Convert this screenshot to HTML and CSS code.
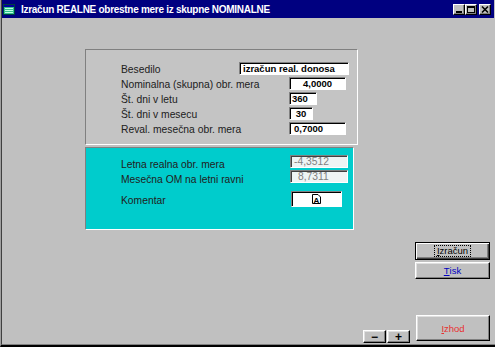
FILE: index.html
```html
<!DOCTYPE html>
<html>
  <head>
    <meta charset="utf-8">
    <title>Izračun REALNE obrestne mere iz skupne NOMINALNE</title>
    <link rel="stylesheet" href="styles.css">
  </head>
  <body>
    <div class="window">
      <div class="frame">
        <div class="titlebar">
          <svg class="app-icon" width="12" height="11" viewBox="0 0 12 11">
            <rect x="0.5" y="0.5" width="11" height="10" fill="#30c090" stroke="#004040"/>
            <rect x="1" y="1" width="10" height="2" fill="#0000a0"/>
            <line x1="2" y1="4.5" x2="10" y2="4.5" stroke="#c0ffe0"/>
            <line x1="2" y1="6.5" x2="10" y2="6.5" stroke="#c0ffe0"/>
            <line x1="2" y1="8.5" x2="10" y2="8.5" stroke="#c0ffe0"/>
          </svg>
          <span class="title">Izračun REALNE obrestne mere iz skupne NOMINALNE</span>
          <div class="caption-btns">
            <span class="cap-btn">
              <svg width="10" height="9" viewBox="0 0 10 9"><rect x="2" y="6" width="6" height="2" fill="#000"/></svg>
            </span>
            <span class="cap-btn">
              <svg width="10" height="9" viewBox="0 0 10 9"><rect x="1.5" y="1.5" width="7" height="6" fill="none" stroke="#000"/><rect x="1" y="1" width="8" height="2" fill="#000"/></svg>
            </span>
            <span class="cap-btn cap-close">
              <svg width="10" height="9" viewBox="0 0 10 9"><path d="M2 1.5 L8 7.5 M8 1.5 L2 7.5" stroke="#000" stroke-width="1.6"/></svg>
            </span>
          </div>
        </div>

        <div class="client">
          <div class="panel panel-input">
            <div class="row">
              <span class="label label-short">Besedilo</span>
              <span class="field field-text">izračun real. donosa</span>
            </div>
            <div class="row">
              <span class="label">Nominalna (skupna) obr. mera</span>
              <span class="field field-wide align-center">4,0000</span>
            </div>
            <div class="row">
              <span class="label">Št. dni v letu</span>
              <span class="field field-days">360</span>
            </div>
            <div class="row">
              <span class="label">Št. dni v mesecu</span>
              <span class="field field-month align-center">30</span>
            </div>
            <div class="row">
              <span class="label">Reval. mesečna obr. mera</span>
              <span class="field field-wide">0,7000</span>
            </div>
          </div>

          <div class="panel panel-result">
            <div class="row">
              <span class="label label-low">Letna realna obr. mera</span>
              <span class="field field-out">-4,3512</span>
            </div>
            <div class="row">
              <span class="label label-low">Mesečna OM na letni ravni</span>
              <span class="field field-out field-pos">8,7311</span>
            </div>
            <div class="row row-memo">
              <span class="label label-memo">Komentar</span>
              <span class="field field-memo">
                <svg width="9" height="10" viewBox="0 0 9 10">
                  <path d="M0.5 0.5 H6 L8.5 3 V9.5 H0.5 Z" fill="#fff" stroke="#000"/>
                  <text x="4.3" y="8.6" font-family="Liberation Sans, sans-serif" font-size="8" font-weight="bold" text-anchor="middle" fill="#000">A</text>
                </svg>
              </span>
            </div>
          </div>

          <div class="actions">
            <button class="btn btn-default"><span class="focus"><u>I</u>zračun</span></button>
            <button class="btn btn-print"><u>T</u>isk</button>
          </div>

          <div class="footer">
            <div class="steps">
              <button class="btn btn-step">−</button>
              <button class="btn btn-step">+</button>
            </div>
            <button class="btn btn-exit"><u>I</u>zhod</button>
          </div>
        </div>
      </div>
    </div>
  </body>
</html>
```

FILE: styles.css
```css
html,
body {
  margin: 0;
  padding: 0;
  background-color: #C0C0C0;
}
body {
  font-family: "Liberation Sans", Arial, sans-serif;
  font-size: 10.3px;
  color: #202020;
}
.window {
  width: 495px;
  height: 347px;
  box-sizing: border-box;
  border-left: 1px solid #A0A0A0;
  border-bottom: 2px solid #000;
}
.frame {
  height: 100%;
  box-sizing: border-box;
  border-left: 1px solid #404040;
  border-bottom: 1px solid #808080;
}
.titlebar {
  display: flex;
  align-items: center;
  height: 18px;
  margin-right: 1px;
  background-color: #000080;
}
.app-icon {
  margin-left: 1px;
  margin-top: 1px;
}
.title {
  margin-left: 6px;
  color: #FFF;
  font-size: 10px;
  font-weight: bold;
  letter-spacing: -0.28px;
}
.caption-btns {
  display: flex;
  margin-left: auto;
  margin-right: 3px;
}
.cap-btn {
  display: flex;
  align-items: center;
  justify-content: center;
  width: 12px;
  height: 11px;
  box-sizing: border-box;
  background-color: #C0C0C0;
  border: 1px solid;
  border-color: #FFF #000 #000 #FFF;
  box-shadow: inset -1px -1px #808080;
}
.cap-close {
  margin-left: 2px;
}

.client {
  padding-left: 83px;
  padding-top: 31px;
}
.panel {
  box-sizing: border-box;
  border: 1px solid;
  border-color: #808080 #FFF #FFF #808080;
  padding-left: 35px;
}
.panel-input {
  width: 273px;
  height: 96px;
  padding-top: 12px;
  background-color: #C4C4C4;
}
.panel-result {
  width: 269px;
  height: 83px;
  margin-top: 2px;
  padding-top: 7px;
  background-color: #00CCCC;
}
.row {
  display: flex;
  align-items: center;
  height: 13px;
  margin-bottom: 2px;
}
.label {
  width: 168px;
  flex-shrink: 0;
  white-space: nowrap;
  padding-top: 2px;
}
.label-short {
  width: 118px;
}
.label-low {
  width: 169px;
  padding-top: 6px;
}
.label-memo {
  width: 170px;
}
.row-memo {
  height: 16px;
  margin-top: 8px;
}

.field {
  display: block;
  box-sizing: border-box;
  height: 13px;
  line-height: 11px;
  padding-left: 2px;
  background-color: #FFF;
  border: 1px solid;
  border-color: #808080 #FFF #FFF #808080;
  box-shadow: inset 1px 1px #000;
  color: #000;
  font-size: 9.5px;
  font-weight: bold;
  white-space: nowrap;
}
.field-text {
  width: 110px;
  padding-left: 3px;
}
.field-wide {
  width: 57px;
  padding-left: 4px;
}
.field-days {
  width: 28px;
}
.field-month {
  width: 24px;
}
.align-center {
  text-align: center;
  padding-left: 0;
}
.field-out {
  width: 58px;
  padding-left: 3px;
  background-color: #EEF4F4;
  box-shadow: inset 1px 1px #404040;
  color: #808080;
  font-size: 10.3px;
  font-weight: normal;
}
.field-pos {
  padding-left: 7px;
}
.field-memo {
  display: flex;
  align-items: center;
  justify-content: center;
  width: 51px;
  height: 16px;
  padding-left: 0;
}

.btn {
  display: flex;
  align-items: center;
  justify-content: center;
  box-sizing: border-box;
  padding: 0;
  margin: 0;
  background-color: #C0C0C0;
  border: 1px solid;
  border-color: #FFF #000 #000 #FFF;
  box-shadow: inset -1px -1px #808080, inset 1px 1px #DFDFDF;
  font-family: "Liberation Sans", Arial, sans-serif;
  font-size: 9.5px;
  color: #000;
}
.actions {
  display: flex;
  flex-direction: column;
  gap: 2px;
  margin-left: 330px;
  margin-top: 12px;
}
.btn-default,
.btn-print {
  width: 75px;
}
.btn-default {
  height: 18px;
  border-color: #000;
  box-shadow: inset 1px 1px #FFF, inset -1px -1px #404040, inset -2px -2px #808080;
}
.focus {
  padding: 0 2px;
  outline: 1px dotted #000;
  line-height: 10px;
}
.btn-print {
  height: 17px;
  color: #0000C0;
}
.footer {
  display: flex;
  align-items: flex-start;
  margin-top: 36px;
  margin-left: 278px;
}
.steps {
  display: flex;
  gap: 1px;
  margin-top: 15px;
  margin-right: 6px;
}
.btn-step {
  width: 23px;
  height: 13px;
  font-size: 12px;
  font-weight: bold;
  line-height: 10px;
}
.btn-exit {
  width: 74px;
  height: 26px;
  color: #E83030;
}
```
